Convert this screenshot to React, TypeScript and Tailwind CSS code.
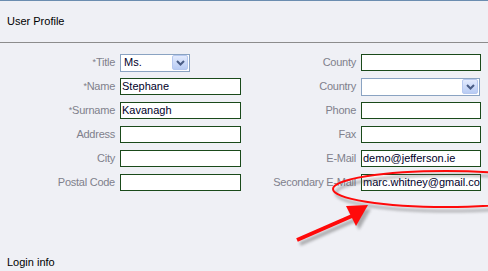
import React from "react";

const labelCls =
  "text-right text-[11px] tracking-[-0.25px] text-[#80808c] leading-[17px] whitespace-nowrap";
const inputCls =
  "h-[17px] border border-[#1a4a1a] bg-white text-[11px] leading-[15px] text-[#00002a] pl-[1px] overflow-hidden whitespace-nowrap";

function Chevron() {
  return (
    <div className="w-[16px] h-[15px] rounded-[2px] border border-[#b6c8ef] bg-gradient-to-b from-[#e3ebfd] to-[#b8cbf4] flex items-center justify-center">
      <svg width="9" height="6" viewBox="0 0 9 6">
        <polyline points="1,1 4.5,4.5 8,1" fill="none" stroke="#4a5d86" strokeWidth="2" />
      </svg>
    </div>
  );
}

function Select({ w, value }: { w: string; value?: string }) {
  return (
    <div
      className={`${w} h-[18px] border border-[#8aa3c2] bg-white flex items-center justify-between pl-[3px] pr-px text-[11px] text-[#00002a]`}
    >
      <span>{value ?? ""}</span>
      <Chevron />
    </div>
  );
}

function LeftRow({ label, req, children }: { label: string; req?: boolean; children: React.ReactNode }) {
  return (
    <div className="flex items-center h-[17px]">
      <div className={`w-[115px] ${labelCls}`}>
        {req && <span className="text-[9px] align-top">*</span>}
        {label}
      </div>
      <div className="ml-[5px]">{children}</div>
    </div>
  );
}

function RightRow({ label, children }: { label: string; children: React.ReactNode }) {
  return (
    <div className="flex items-center h-[17px]">
      <div className={`w-[112px] ${labelCls}`}>{label}</div>
      <div className="ml-[5px]">{children}</div>
    </div>
  );
}

function Input({ w, value }: { w: string; value?: string }) {
  return <div className={`${w} ${inputCls}`}>{value ?? ""}</div>;
}

export default function App() {
  return (
    <div
      className="relative w-[488px] h-[271px] overflow-hidden bg-[#eff0f5] border-t border-[#6b8db0]"
      style={{ fontFamily: '"Liberation Sans", Arial, sans-serif' }}
    >
      <div className="h-[41px] flex items-center pl-[7px] text-[11px] text-black">User Profile</div>
      <div className="h-px bg-[#8c8c8c]" />
      <div className="grid grid-cols-[244px_244px] pt-[11px]">
        <div className="flex flex-col gap-[7px]">
          <LeftRow label="Title" req>
            <Select w="w-[70px]" value="Ms." />
          </LeftRow>
          <LeftRow label="Name" req>
            <Input w="w-[121px]" value="Stephane" />
          </LeftRow>
          <LeftRow label="Surname" req>
            <Input w="w-[121px]" value="Kavanagh" />
          </LeftRow>
          <LeftRow label="Address">
            <Input w="w-[121px]" />
          </LeftRow>
          <LeftRow label="City">
            <Input w="w-[121px]" />
          </LeftRow>
          <LeftRow label="Postal Code">
            <Input w="w-[121px]" />
          </LeftRow>
        </div>
        <div className="flex flex-col gap-[7px]">
          <RightRow label="County">
            <Input w="w-[120px]" />
          </RightRow>
          <RightRow label="Country">
            <Select w="w-[119px]" />
          </RightRow>
          <RightRow label="Phone">
            <Input w="w-[120px]" />
          </RightRow>
          <RightRow label="Fax">
            <Input w="w-[120px]" />
          </RightRow>
          <RightRow label="E-Mail">
            <Input w="w-[120px]" value="demo@jefferson.ie" />
          </RightRow>
          <RightRow label="Secondary E-Mail">
            <Input w="w-[120px]" value="marc.whitney@gmail.com" />
          </RightRow>
        </div>
      </div>
      <div className="mt-[65px] pl-[7px] text-[11px] leading-[13px] text-black">Login info</div>

      <svg className="absolute left-0 top-0 pointer-events-none" width="488" height="271" viewBox="0 0 488 271">
        <defs>
          <filter id="sh" x="-20%" y="-50%" width="140%" height="200%">
            <feGaussianBlur stdDeviation="1.5" />
          </filter>
        </defs>
        <g filter="url(#sh)" opacity="0.45" transform="translate(3,4)">
          <ellipse cx="446" cy="188" rx="113" ry="18" fill="none" stroke="#555" strokeWidth="2.5" />
          <line x1="297" y1="239" x2="352" y2="215" stroke="#555" strokeWidth="4" />
          <polygon points="346,205 368,204 356,225" fill="#555" />
        </g>
        <ellipse cx="446" cy="188" rx="113" ry="18" fill="none" stroke="#ff0a0a" strokeWidth="2" />
        <line x1="297" y1="239" x2="352" y2="215" stroke="#ff0a0a" strokeWidth="4" />
        <polygon points="346,205 368,204 356,225" fill="#ff0a0a" />
      </svg>
    </div>
  );
}
